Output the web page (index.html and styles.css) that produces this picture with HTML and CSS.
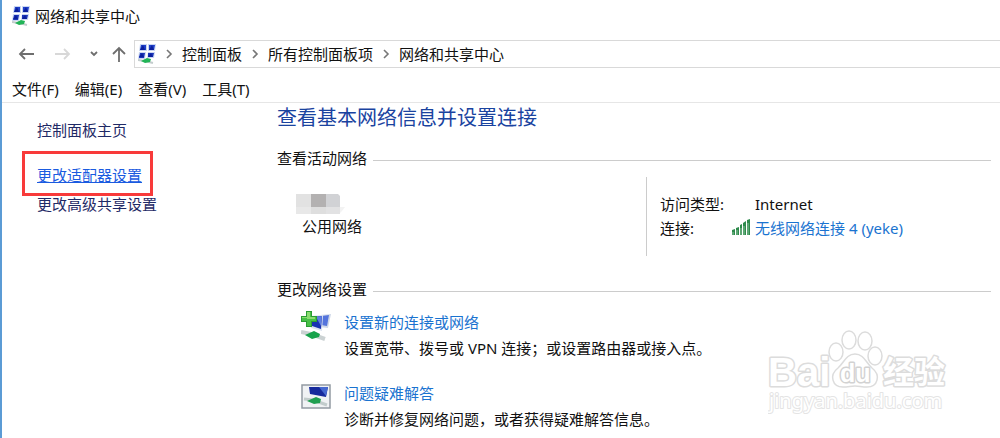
FILE: index.html
```html
<!DOCTYPE html>
<html lang="zh-CN">

<head>
    <meta charset="UTF-8">
    <meta name="viewport" content="width=device-width, initial-scale=1.0">
    <title>网络和共享中心</title>
    <link rel="stylesheet" href="styles.css">
</head>

<body>
    <svg class="sprites" aria-hidden="true">
        <symbol id="icon-network" viewBox="0 0 18 20">
            <path d="M2 0h7v7H1zM10 0h8l-1 7h-7zM1 8h7l-1 7H0zM10 8h7l-1 6h-7z" fill="#c9d6f2" />
            <path d="M3 1h5v5H2zM11 1h6l-1 5h-5z" fill="#1f3fc8" />
            <path d="M2 9h5l-1 5H1zM10 9h6l-1 4h-5z" fill="#1b35b8" />
            <path d="M2 6l3-5 2 5zM11 6l3-5 2 5zM1 13l3-4 2 4zM10 13l3-4 2 4z" fill="#0b1f9c" />
            <path d="M0 16l7 1 8 2" stroke="#c3cccd" stroke-width="2" fill="none" />
            <path d="M3 17l6-3 4 1-1 3-5 1z" fill="#22b457" />
        </symbol>
        <symbol id="icon-chevron" viewBox="0 0 8 10">
            <path d="M2 1l4 4-4 4" fill="none" stroke="#777" stroke-width="1.6" />
        </symbol>
    </svg>

    <div class="window">
        <header class="titlebar">
            <svg class="icon-small"><use href="#icon-network" /></svg>
            <span>网络和共享中心</span>
        </header>

        <div class="navbar">
            <div class="nav-buttons">
                <button class="nav-button" aria-label="后退">
                    <svg width="16" height="14" viewBox="0 0 16 14"><path d="M16 7H2M7 2L2 7l5 5" /></svg>
                </button>
                <button class="nav-button" aria-label="前进" disabled>
                    <svg width="16" height="14" viewBox="0 0 16 14"><path d="M0 7h14M9 2l5 5-5 5" /></svg>
                </button>
                <button class="nav-button narrow" aria-label="最近浏览的位置">
                    <svg width="8" height="8" viewBox="0 0 8 8"><path d="M1 2l3 3 3-3" /></svg>
                </button>
                <button class="nav-button" aria-label="向上">
                    <svg width="14" height="16" viewBox="0 0 14 16"><path d="M7 16V2M1 8l6-6 6 6" /></svg>
                </button>
            </div>
            <nav class="address">
                <svg class="icon-small"><use href="#icon-network" /></svg>
                <svg class="chevron"><use href="#icon-chevron" /></svg>
                <a href="#">控制面板</a>
                <svg class="chevron"><use href="#icon-chevron" /></svg>
                <a href="#">所有控制面板项</a>
                <svg class="chevron"><use href="#icon-chevron" /></svg>
                <a href="#">网络和共享中心</a>
            </nav>
        </div>

        <div class="menubar">
            <button>文件(F)</button>
            <button>编辑(E)</button>
            <button>查看(V)</button>
            <button>工具(T)</button>
        </div>

        <div class="body">
            <aside class="sidebar">
                <a href="#" class="home">控制面板主页</a>
                <a href="#" class="highlight">更改适配器设置</a>
                <a href="#">更改高级共享设置</a>
            </aside>

            <main class="content">
                <h1>查看基本网络信息并设置连接</h1>

                <h2>查看活动网络</h2>
                <div class="active-network">
                    <div class="network">
                        <svg class="network-name" width="50" height="20" viewBox="0 0 50 20" role="img" aria-label="网络名称">
                            <path d="M0 0h15v13H0z" fill="#e2e2e2" />
                            <path d="M15 0h15v13H15z" fill="#b3b1b1" />
                            <path d="M30 0h12l2 2v11H30z" fill="#d1d2d5" />
                            <path d="M0 13h15v7H0z" fill="#e8e8e8" />
                            <path d="M15 13h15v7H15z" fill="#dedede" />
                            <path d="M30 13h14v7H30z" fill="#e2e2e3" />
                            <path d="M44 13h5l-3 4-2 2z" fill="#f3f3f3" />
                        </svg>
                        <span>公用网络</span>
                    </div>
                    <dl class="details">
                        <dt>访问类型:</dt>
                        <dd>Internet</dd>
                        <dt>连接:</dt>
                        <dd>
                            <svg class="signal" width="18" height="16" viewBox="0 0 18 16">
                                <path d="M0 11l3-1v6H0zM4 9l3-1v8H4zM8 6l2-1v11H8zM11 4l3-2v14h-3zM15 1l3-1v16h-3z" fill="#2e8a4c" />
                                <path d="M1 13v3M5 11v5M9 9v7M12 7v9M16 4v12" stroke="#8cc39c" />
                            </svg>
                            <a href="#">无线网络连接 4 (yeke)</a>
                        </dd>
                    </dl>
                </div>

                <h2>更改网络设置</h2>
                <ul class="tasks">
                    <li>
                        <svg width="30" height="30" viewBox="0 0 30 30">
                            <path d="M19 4l11-1-3 14-9-1z" fill="#cfd8e8" />
                            <path d="M21 5l7-1-2 11-6-1z" fill="#5474dc" />
                            <path d="M8 5l14-1-1 16-11-3z" fill="#dde4f0" />
                            <path d="M10 6l11-1-1 13-9-3z" fill="#1832b2" />
                            <path d="M15 6l6-1-1 10z" fill="#5f7fe0" />
                            <path d="M0 21l10 2 14 5" stroke="#cbd2d3" stroke-width="4" fill="none" />
                            <path d="M4 24l9-4 6 3-1 3-7 2z" fill="#18a34c" />
                            <path d="M5 0h6v5h5v6h-5v5H5v-5H0V5h5z" fill="#2b9c33" />
                            <path d="M6 1h4v5h5v4h-5v5H6v-5H1V6h5z" fill="#48c047" />
                            <path d="M6 1h3v5h5v2H6V7H1V6h5z" fill="#8bdc70" />
                        </svg>
                        <div>
                            <a href="#">设置新的连接或网络</a>
                            <p>设置宽带、拨号或 VPN 连接；或设置路由器或接入点。</p>
                        </div>
                    </li>
                    <li>
                        <svg width="30" height="30" viewBox="0 0 30 30">
                            <path d="M1 3h28v23H1z" fill="#f0f2f4" stroke="#929aa2" stroke-width="1.5" />
                            <path d="M8 5h19l-2 10-16-3z" fill="#162a9c" />
                            <path d="M18 5h9l-2 9z" fill="#4568d0" />
                            <path d="M3 17l9 1 14 5" stroke="#c2cccc" stroke-width="3" fill="none" />
                            <path d="M6 19l9-4 5 2-1 4-6 1z" fill="#209f50" />
                        </svg>
                        <div>
                            <a href="#">问题疑难解答</a>
                            <p>诊断并修复网络问题，或者获得疑难解答信息。</p>
                        </div>
                    </li>
                </ul>
            </main>
        </div>

        <svg class="watermark" width="184" height="90" viewBox="0 0 184 90" role="img" aria-label="Baidu 经验 jingyan.baidu.com">
            <text x="0" y="56" class="brand">Bai</text>
            <g class="paw">
                <path d="M87 24c-9 0-11 9-17 14-9 7-6 19 5 19 5 0 8-1 12-1s7 1 12 1c11 0 14-12 5-19-6-5-8-14-17-14z" />
                <ellipse cx="68" cy="22" rx="7" ry="9" />
                <ellipse cx="81" cy="10" rx="7" ry="9" />
                <ellipse cx="97" cy="11" rx="7" ry="9" />
                <ellipse cx="107" cy="26" rx="7" ry="9" />
            </g>
            <text x="72" y="52" class="du">du</text>
            <text x="115" y="53" class="product">经验</text>
            <text x="1" y="78" class="site">jingyan.baidu.com</text>
        </svg>
    </div>
</body>

</html>
```
FILE: styles.css
```css
* {
    box-sizing: border-box;
}

body {
    margin: 0;
    font-family: "Noto Sans", "Noto Sans CJK SC", sans-serif;
    font-size: 15px;
    line-height: 24px;
    color: #111;
    background-color: #fff;
}

h1,
h2,
p,
ul,
dl,
dd {
    margin: 0;
    padding: 0;
    font-weight: normal;
}

a {
    color: #1a73d0;
    text-decoration: none;
}

button {
    padding: 0;
    border: none;
    background: none;
    font: inherit;
    color: inherit;
}

svg {
    flex-shrink: 0;
}

.sprites {
    display: none;
}

.window {
    position: relative;
    min-height: 100vh;
    border-left: 2px solid #5b9bd5;
    overflow: hidden;
}

.icon-small {
    width: 18px;
    height: 20px;
}

.titlebar {
    display: flex;
    align-items: center;
    gap: 5px;
    height: 31px;
    padding-left: 10px;
}

.navbar {
    display: flex;
    align-items: center;
    height: 45px;
}

.nav-buttons {
    display: flex;
    align-items: center;
    gap: 21px;
    padding: 0 8px 0 16px;
}

.nav-button {
    display: flex;
}

.nav-button.narrow {
    margin: 0 -7px 0 -2px;
}

.nav-button path {
    fill: none;
    stroke: #6e6e6e;
    stroke-width: 1.8;
}

.nav-button:disabled path {
    stroke: #d8d8d8;
}

.address {
    flex: 1;
    display: flex;
    align-items: center;
    gap: 9px;
    height: 28px;
    padding-left: 3px;
    border: 1px solid #d9d9d9;
    border-right: none;
}

.address a {
    color: #111;
}

.chevron {
    width: 8px;
    height: 10px;
}

.menubar {
    display: flex;
    gap: 16px;
    height: 27px;
    padding-left: 10px;
    border-bottom: 1px solid #e6e6e6;
}

.body {
    display: flex;
}

.sidebar {
    display: flex;
    flex-direction: column;
    align-items: flex-start;
    flex: 0 0 275px;
    padding: 15px 0 0 20px;
}

.sidebar a {
    padding-left: 15px;
    color: #1f2a66;
}

.sidebar .home {
    margin-bottom: 9px;
}

.sidebar .highlight {
    margin-bottom: -4px;
    padding: 9px 8px 6px 12px;
    border: 3px solid #f83a3a;
    color: #1a5be0;
    text-decoration: underline;
}

.content {
    flex: 1;
    padding: 1px 9px 0 0;
}

h1 {
    font-size: 20px;
    line-height: 28px;
    margin-bottom: 14px;
    color: #1a439f;
}

h2 {
    display: flex;
    align-items: center;
    gap: 6px;
    font-size: 15px;
}

h2::after {
    content: "";
    flex: 1;
    height: 1px;
    margin-top: 4px;
    background-color: #ccc;
}

.active-network {
    display: grid;
    grid-template-columns: 369px 1fr;
    padding: 7px 0 21px;
}

.network {
    display: flex;
    flex-direction: column;
    padding: 17px 0 0 25px;
}

.network-name {
    margin-left: -6px;
}

.details {
    display: grid;
    grid-template-columns: 95px 1fr;
    align-content: start;
    padding: 15px 0 16px 13px;
    border-left: 1px solid #ccc;
}

.details dd {
    position: relative;
}

.signal {
    position: absolute;
    left: -23px;
    top: 3px;
}

.tasks {
    display: flex;
    flex-direction: column;
    gap: 19px;
    padding: 8px 0 0 24px;
    line-height: 26px;
    list-style: none;
}

.tasks li {
    display: flex;
    gap: 13px;
}

.tasks svg {
    margin-top: 2px;
}

.watermark {
    position: absolute;
    right: 48px;
    bottom: 18px;
    fill: #fff;
    stroke: #dcdcdc;
    stroke-width: 3;
    stroke-linejoin: round;
    font-family: "Liberation Sans", "Noto Sans CJK SC", sans-serif;
    font-weight: bold;
    paint-order: stroke;
}

.paw {
    stroke-width: 1.5;
    paint-order: normal;
}

.brand {
    font-size: 40px;
}

.du {
    font-size: 25px;
    stroke: #d2d2d2;
}

.product {
    font-size: 31px;
}

.site {
    font-family: "Noto Sans", sans-serif;
    font-size: 20px;
    font-weight: normal;
    stroke: #e4e4e4;
    stroke-width: 2;
}
```
